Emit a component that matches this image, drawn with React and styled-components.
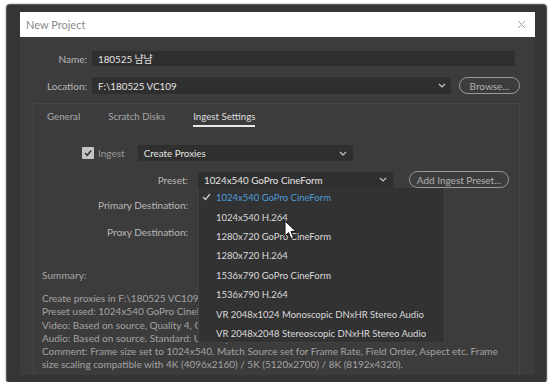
import styled, { createGlobalStyle } from 'styled-components'

const GlobalStyle = createGlobalStyle`
  html, body {
    margin: 0;
    padding: 0;
    background: #ffffff;
  }
  body {
    font-family: Lato, "Liberation Sans", "Noto Sans CJK KR", sans-serif;
  }
`

const Frame = styled.div`
  box-sizing: border-box;
  width: 539px;
  height: 377px;
  margin: 5px 0 0 7px;
  padding: 7px 11px 7px 13px;
  background: #353535;
  border-radius: 3px;
  box-shadow: 0 0 1px 1px #4a4a4a, 0 0 3px #999;
`

const Dialog = styled.div`
  display: flex;
  flex-direction: column;
  height: 100%;
  background: #3d3c3d;
`

const TitleBar = styled.div`
  display: flex;
  align-items: center;
  justify-content: space-between;
  height: 25px;
  padding: 0 9px 0 6px;
  background: #ffffff;
  color: #8a8a8a;
  font-size: 11px;
`

const Body = styled.div`
  flex: 1;
  display: flex;
  flex-direction: column;
  padding-top: 13px;
  min-height: 0;
`

const FieldRow = styled.div`
  display: grid;
  grid-template-columns: 67px 1fr auto;
  column-gap: 5px;
  align-items: center;
  height: 17px;
  margin-bottom: 10px;
  padding-right: 15px;
`

const Label = styled.span`
  text-align: right;
  color: #b8b8b8;
  font-size: 10px;
  white-space: nowrap;
`

const Field = styled.div`
  display: flex;
  align-items: center;
  justify-content: space-between;
  box-sizing: border-box;
  height: ${p => p.$h || 15}px;
  width: ${p => (p.$w ? `${p.$w}px` : 'auto')};
  padding: 0 ${p => p.$pr || 6}px 0 6px;
  background: #2f2f2f;
  color: #e4e4e4;
  font-size: 9.8px;
  white-space: nowrap;
`

const PillButton = styled.div`
  box-sizing: border-box;
  display: flex;
  align-items: center;
  justify-content: center;
  height: 17px;
  width: ${p => p.$w}px;
  margin-left: ${p => p.$ml || 0}px;
  border: 1.5px solid #9a9a9a;
  border-radius: 9px;
  color: #b0b0b0;
  font-size: 10px;
  white-space: nowrap;
`

const Panel = styled.div`
  flex: 1;
  position: relative;
  margin: -1px 15px 0 13px;
  border: 1px solid #474647;
  border-bottom: none;
`

const Tabs = styled.div`
  display: flex;
  align-items: flex-end;
  gap: 28px;
  height: 23px;
  padding-left: 13px;
`

const Tab = styled.div`
  padding-bottom: 3px;
  color: ${p => (p.$active ? '#dedede' : '#a8a8a8')};
  font-size: 9.7px;
  border-bottom: 2px solid ${p => (p.$active ? '#e8e8e8' : 'transparent')};
`

const IngestRow = styled.div`
  display: flex;
  align-items: center;
  height: 16px;
  margin-top: 18px;
  padding-left: 48px;
`

const Checkbox = styled.div`
  display: flex;
  align-items: center;
  justify-content: center;
  width: 12px;
  height: 12px;
  background: #c4c4c4;
  border-radius: 1px;
`

const IngestLabel = styled.span`
  margin: 0 13px 0 4px;
  color: #989898;
  font-size: 10px;
`

const FormRow = styled.div`
  position: relative;
  display: grid;
  grid-template-columns: 154px auto auto 1fr;
  column-gap: 10px;
  align-items: center;
  height: 16px;
  margin-top: ${p => p.$top}px;
`

const Menu = styled.div`
  position: absolute;
  top: 17px;
  left: 164px;
  z-index: 2;
  box-sizing: border-box;
  width: 247px;
  height: 155px;
  background: #333233;
  border: 1px solid #424142;
  border-top: none;
`

const MenuItem = styled.div`
  position: relative;
  display: flex;
  align-items: center;
  height: 19.4px;
  padding-left: 17px;
  color: ${p => (p.$selected ? '#4a9edb' : '#dadada')};
  font-size: 9.5px;
  white-space: nowrap;
`

const Check = styled.span`
  position: absolute;
  left: 3px;
  top: 5px;
  display: flex;
`

const Cursor = styled.svg`
  position: absolute;
  left: 85px;
  top: 32px;
  z-index: 3;
`

const SummaryTitle = styled.div`
  margin: 27px 0 0 8px;
  color: #a6a6a6;
  font-size: 10.2px;
  height: 16px;
  line-height: 16px;
`

const SummaryText = styled.div`
  margin: 9px 0 0 8px;
  color: #a3a3a3;
  font-size: 10px;
  line-height: 13.3px;
  white-space: nowrap;
`

const Chevron = () => (
  <svg width="8" height="5" viewBox="0 0 8 5">
    <path d="M1 1 L4 4 L7 1" fill="none" stroke="#c8c8c8" strokeWidth="1.2" />
  </svg>
)

const presets = [
  '1024x540 GoPro CineForm',
  '1024x540 H.264',
  '1280x720 GoPro CineForm',
  '1280x720 H.264',
  '1536x790 GoPro CineForm',
  '1536x790 H.264',
  'VR 2048x1024 Monoscopic DNxHR Stereo Audio',
  'VR 2048x2048 Stereoscopic DNxHR Stereo Audio'
]

const summary = [
  'Create proxies in F:\\180525 VC109',
  'Preset used: 1024x540 GoPro CineForm',
  'Video: Based on source, Quality 4, GoPro CineForm YUV 10-bit',
  'Audio: Based on source. Standard: Uncompressed',
  'Comment: Frame size set to 1024x540. Match Source set for Frame Rate, Field Order, Aspect etc. Frame',
  'size scaling compatible with 4K (4096x2160) / 5K (5120x2700) / 8K (8192x4320).'
]

function App() {
  return (
    <>
      <GlobalStyle />
      <Frame>
        <Dialog>
          <TitleBar>
            <span>New Project</span>
            <svg width="9" height="9" viewBox="0 0 9 9">
              <path d="M1 1 L8 8 M8 1 L1 8" stroke="#a0a0a0" strokeWidth="1" />
            </svg>
          </TitleBar>
          <Body>
            <FieldRow>
              <Label>Name:</Label>
              <Field>180525 냠냠</Field>
            </FieldRow>
            <FieldRow>
              <Label>Location:</Label>
              <Field $h={17} $pr={5}>
                F:\180525 VC109
                <Chevron />
              </Field>
              <PillButton $w={61} $ml={3}>Browse...</PillButton>
            </FieldRow>
            <Panel>
              <Tabs>
                <Tab>General</Tab>
                <Tab>Scratch Disks</Tab>
                <Tab $active>Ingest Settings</Tab>
              </Tabs>
              <IngestRow>
                <Checkbox>
                  <svg width="10" height="10" viewBox="0 0 10 10">
                    <path d="M2 5 L4.2 7.3 L8.2 2.5" fill="none" stroke="#333" strokeWidth="1.6" />
                  </svg>
                </Checkbox>
                <IngestLabel>Ingest</IngestLabel>
                <Field $h={16} $w={215}>
                  Create Proxies
                  <Chevron />
                </Field>
              </IngestRow>
              <FormRow $top={10}>
                <Label>Preset:</Label>
                <Field $h={16} $w={195}>
                  1024x540 GoPro CineForm
                  <Chevron />
                </Field>
                <PillButton $w={100} $ml={6}>Add Ingest Preset...</PillButton>
                <Menu>
                  {presets.map((p, i) => (
                    <MenuItem key={p} $selected={i === 0}>
                      {i === 0 && (
                        <Check>
                          <svg width="9" height="8" viewBox="0 0 9 8">
                            <path d="M1 4 L3.5 6.5 L8 1" fill="none" stroke="#cfcfcf" strokeWidth="1.2" />
                          </svg>
                        </Check>
                      )}
                      {p}
                    </MenuItem>
                  ))}
                  <Cursor width="13" height="21" viewBox="0 0 13 21">
                    <path
                      d="M1 1 L1 16 L4.5 12.5 L7 18.5 L9.5 17.5 L7 11.5 L12 11.5 Z"
                      fill="#ffffff"
                      stroke="#111"
                      strokeWidth="1"
                      strokeLinejoin="round"
                    />
                  </Cursor>
                </Menu>
              </FormRow>
              <FormRow $top={10}>
                <Label>Primary Destination:</Label>
              </FormRow>
              <FormRow $top={11}>
                <Label>Proxy Destination:</Label>
              </FormRow>
              <SummaryTitle>Summary:</SummaryTitle>
              <SummaryText>
                {summary.map(line => (
                  <div key={line}>{line}</div>
                ))}
              </SummaryText>
            </Panel>
          </Body>
        </Dialog>
      </Frame>
    </>
  )
}

export default App
